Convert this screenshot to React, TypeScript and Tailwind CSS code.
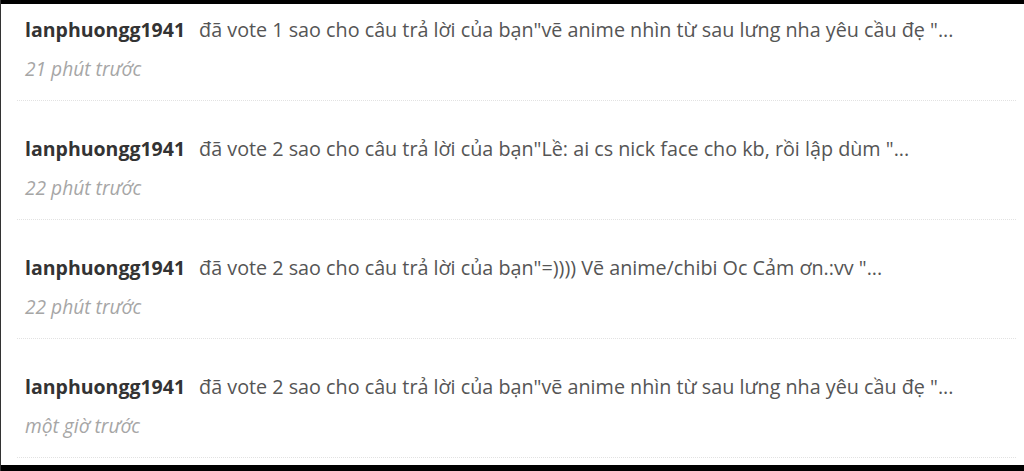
import { FC } from "react";

interface Notice {
  user: string;
  text: string;
  time: string;
}

const notices: Notice[] = [
  { user: "lanphuongg1941", text: "đã vote 1 sao cho câu trả lời của bạn\"vẽ anime nhìn từ sau lưng nha yêu cầu đẹ \"...", time: "21 phút trước" },
  { user: "lanphuongg1941", text: "đã vote 2 sao cho câu trả lời của bạn\"Lề: ai cs nick face cho kb, rồi lập dùm \"...", time: "22 phút trước" },
  { user: "lanphuongg1941", text: "đã vote 2 sao cho câu trả lời của bạn\"=)))) Vẽ anime/chibi Oc Cảm ơn.:vv \"...", time: "22 phút trước" },
  { user: "lanphuongg1941", text: "đã vote 2 sao cho câu trả lời của bạn\"vẽ anime nhìn từ sau lưng nha yêu cầu đẹ \"...", time: "một giờ trước" },
];

const Row: FC<{ n: Notice; first?: boolean }> = ({ n, first }) => (
  <div className={`ml-4 mr-2 pl-[8px] pb-[19px] border-b border-dotted border-[#e2e2e2] ${first ? "pt-[14px]" : "pt-[36px]"}`}>
    <div className="flex items-baseline h-6 leading-6 whitespace-nowrap">
      <span className="font-bold text-[19.5px] text-[#333]">{n.user}</span>
      <span className="ml-[14px] text-[19.75px] text-[#555]">{n.text}</span>
    </div>
    <div className="mt-[15px] h-6 leading-6 italic text-[19.2px] text-[#a6a6a6]">{n.time}</div>
  </div>
);

export default function App() {
  return (
    <div className="w-[1024px] h-[471px] bg-white flex flex-col overflow-hidden border-l border-[#333]" style={{ fontFamily: '"Open Sans", "Noto Sans", sans-serif' }}>
      <div className="h-1 bg-black shrink-0" />
      {notices.map((n, i) => (
        <Row key={i} n={n} first={i === 0} />
      ))}
      <div className="flex-1" />
      <div className="h-[6px] bg-black shrink-0" />
    </div>
  );
}
